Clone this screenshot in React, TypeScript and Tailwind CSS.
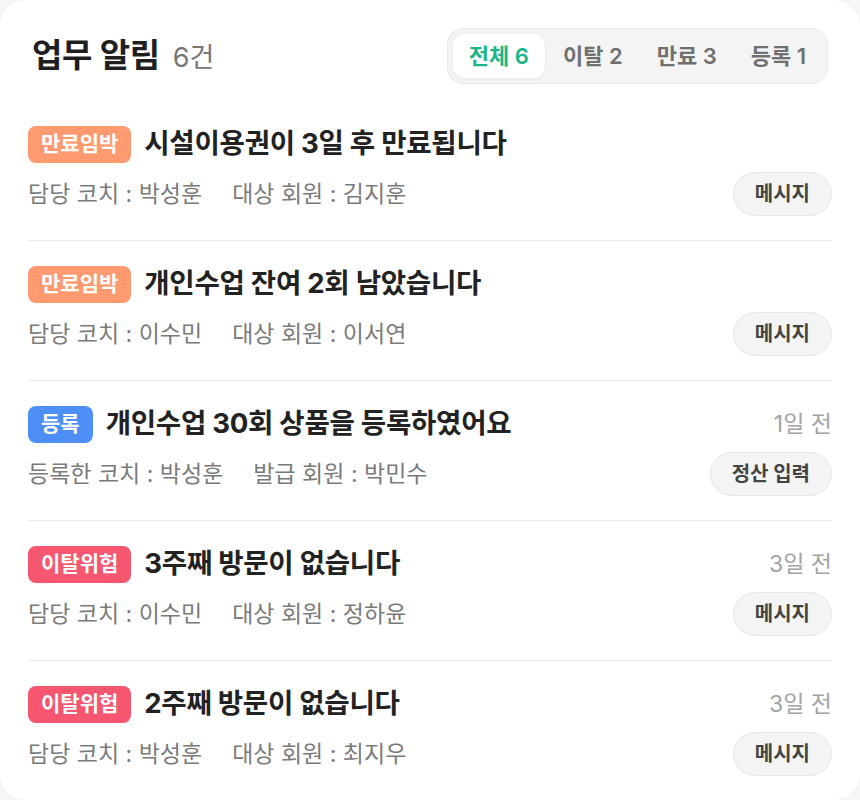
import React from 'react';

type Alert = {
  tag: '만료임박' | '등록' | '이탈위험';
  title: string;
  meta: [string, string];
  time?: string;
  action: string;
};

const alerts: Alert[] = [
  { tag: '만료임박', title: '시설이용권이 3일 후 만료됩니다', meta: ['담당 코치 : 박성훈', '대상 회원 : 김지훈'], action: '메시지' },
  { tag: '만료임박', title: '개인수업 잔여 2회 남았습니다', meta: ['담당 코치 : 이수민', '대상 회원 : 이서연'], action: '메시지' },
  { tag: '등록', title: '개인수업 30회 상품을 등록하였어요', meta: ['등록한 코치 : 박성훈', '발급 회원 : 박민수'], time: '1일 전', action: '정산 입력' },
  { tag: '이탈위험', title: '3주째 방문이 없습니다', meta: ['담당 코치 : 이수민', '대상 회원 : 정하윤'], time: '3일 전', action: '메시지' },
  { tag: '이탈위험', title: '2주째 방문이 없습니다', meta: ['담당 코치 : 박성훈', '대상 회원 : 최지우'], time: '3일 전', action: '메시지' },
];

const tagStyle: Record<Alert['tag'], string> = {
  만료임박: 'bg-[#ff9a70]',
  등록: 'bg-[#4d8ff6]',
  이탈위험: 'bg-[#f6566f]',
};

const tabs = [
  { label: '전체 6', active: true },
  { label: '이탈 2' },
  { label: '만료 3' },
  { label: '등록 1' },
];

const AlertRow = ({ alert, last }: { alert: Alert; last: boolean }) => (
  <div className={`pt-6 pb-6 ${last ? '' : 'border-b border-[#ececec]'}`}>
    <div className="flex h-[38px] items-center">
      <span className={`flex h-[37px] items-center rounded-[8px] px-[13px] text-[21px] font-bold text-white ${tagStyle[alert.tag]}`}>
        {alert.tag}
      </span>
      <span className="ml-[13px] text-[27.6px] font-bold tracking-[-0.3px] text-[#222]">{alert.title}</span>
      {alert.time && <span className="ml-auto text-[23px] text-[#a3a3a3]">{alert.time}</span>}
    </div>
    <div className="mt-[9px] flex h-[44px] items-center">
      <span className="text-[23px] text-[#7a7a7a]">{alert.meta[0]}</span>
      <span className="ml-[30px] text-[23px] text-[#7a7a7a]">{alert.meta[1]}</span>
      <button className="ml-auto h-[44px] rounded-full border border-[#e6e6e6] bg-[#f4f4f4] px-[21px] text-[20px] font-bold text-[#444]">
        {alert.action}
      </button>
    </div>
  </div>
);

export default function App() {
  return (
    <div className="min-h-[800px] bg-[#f7f7f7] font-['Inter','Noto_Sans_CJK_KR',sans-serif]">
      <div className="min-h-[800px] rounded-[26px] bg-white px-7 pt-7 shadow-[0_0_2px_rgba(0,0,0,0.06)]">
        <div className="flex items-center justify-between">
          <div className="flex items-baseline pl-1">
            <h1 className="text-[33px] font-bold tracking-[-0.3px] text-[#1f1f1f]">업무 알림</h1>
            <span className="ml-[13px] text-[27px] text-[#777]">6건</span>
          </div>
          <div className="mr-[4px] flex h-[56px] items-center gap-[2px] rounded-[16px] border border-[#e8e8e8] bg-[#f4f4f4] px-[5px]">
            {tabs.map((t) => (
              <button
                key={t.label}
                className={`h-[44px] rounded-[12px] px-[16px] text-[22px] font-semibold ${
                  t.active ? 'bg-white text-[#18b68a] shadow-[0_1px_4px_rgba(0,0,0,0.06)]' : 'text-[#707070]'
                }`}
              >
                {t.label}
              </button>
            ))}
          </div>
        </div>
        <div className="mt-[17px]">
          {alerts.map((a, i) => (
            <AlertRow key={i} alert={a} last={i === alerts.length - 1} />
          ))}
        </div>
      </div>
    </div>
  );
}
